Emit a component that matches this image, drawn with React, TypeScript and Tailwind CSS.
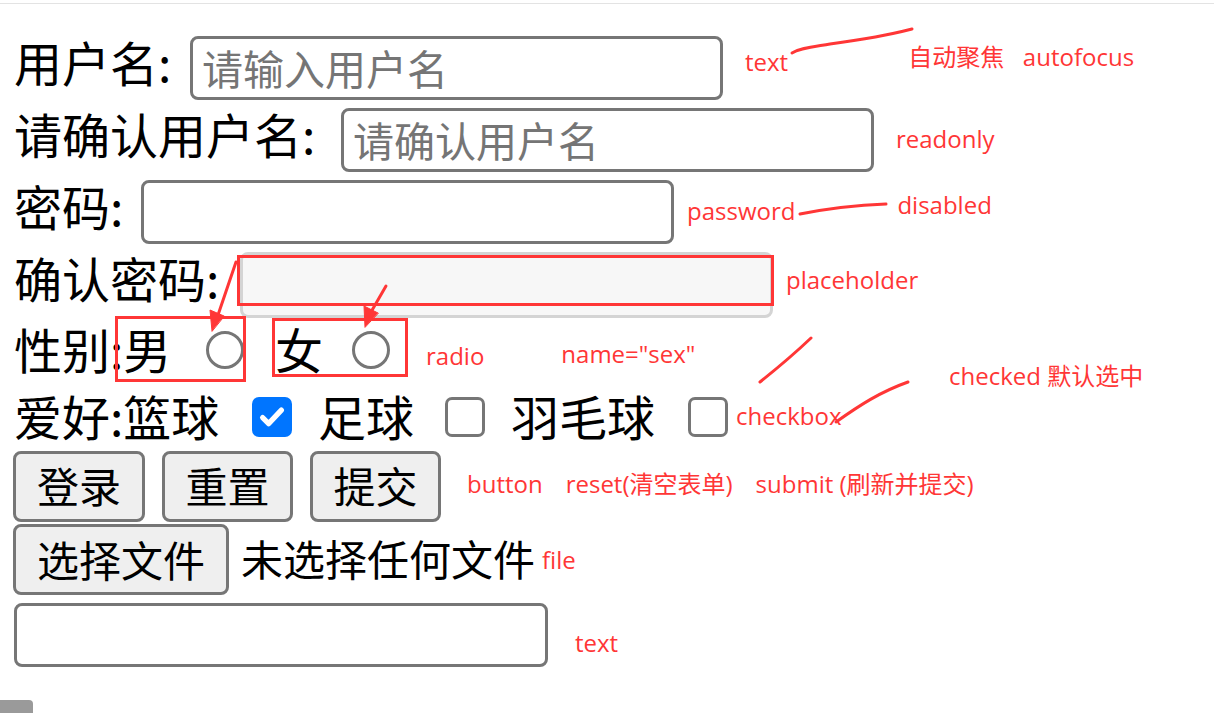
import React from 'react';

const RED = '#ff3636';

function TextInput({ placeholder, className = '' }: { placeholder?: string; className?: string }) {
  return (
    <input
      type="text"
      placeholder={placeholder}
      className={`h-[64px] w-[533px] shrink-0 rounded-[8px] border-[3px] border-[#767676] bg-white px-[9px] pb-[2px] text-[41px] text-black outline-none placeholder:text-[#757575] ${className}`}
    />
  );
}

function Radio() {
  return <span className="block h-[38px] w-[38px] shrink-0 rounded-full border-[3px] border-[#767676] bg-white" />;
}

function Checkbox({ checked }: { checked?: boolean }) {
  if (checked) {
    return (
      <span className="flex h-[40px] w-[40px] shrink-0 items-center justify-center rounded-[7px] bg-[#0075ff]">
        <svg width="30" height="30" viewBox="0 0 24 24" fill="none">
          <path d="M4.5 12.5l4.8 4.8L19.5 6.5" stroke="white" strokeWidth="4.2" strokeLinecap="round" strokeLinejoin="round" />
        </svg>
      </span>
    );
  }
  return <span className="block h-[40px] w-[40px] shrink-0 rounded-[7px] border-[3px] border-[#767676] bg-white" />;
}

function Btn({ children, w }: { children: React.ReactNode; w: string }) {
  return (
    <button className={`flex h-[71px] ${w} shrink-0 items-center justify-center rounded-[8px] border-[3px] border-[#767676] bg-[#efefef] pb-[2px] text-[42px] text-black`}>
      {children}
    </button>
  );
}

// red handwritten note, sits in the row flow
function Note({ className = '', children }: { className?: string; children: React.ReactNode }) {
  return (
    <span className={`note shrink-0 whitespace-pre text-[24px] leading-none text-[#ff3636] ${className}`}>
      {children}
    </span>
  );
}

export default function App() {
  return (
    <div
      className="relative h-[713px] w-[1214px] overflow-hidden bg-white text-black"
      style={{ fontFamily: '"Noto Sans CJK SC", "Noto Sans", sans-serif' }}
    >
      <style>{`.note{font-family:"Open Sans","Noto Sans CJK SC",sans-serif}`}</style>
      <div className="h-[4px] border-b border-[#e3e3e3]" />

      <div className="flex flex-col pl-[14px] pt-[28px] text-[48px] leading-none">
        <div className="flex h-[72px] items-center">
          <span className="w-[176px] shrink-0 pb-[15px]">用户名:</span>
          <TextInput placeholder="请输入用户名" />
          <Note className="ml-[22px] pb-[12px]">text</Note>
          <Note className="ml-[120px] pb-[22px]">{'自动聚焦   autofocus'}</Note>
        </div>
        <div className="flex h-[72px] items-center">
          <span className="w-[327px] shrink-0 pb-[15px]">请确认用户名:</span>
          <TextInput placeholder="请确认用户名" />
          <Note className="ml-[22px] pb-[2px]">readonly</Note>
        </div>
        <div className="flex h-[72px] items-center">
          <span className="w-[127px] shrink-0 pb-[15px]">密码:</span>
          <TextInput />
          <Note className="ml-[13px] pb-[2px]">password</Note>
          <Note className="ml-[102px] pb-[14px]">disabled</Note>
        </div>
        <div className="flex h-[73px] items-center">
          <span className="w-[226px] shrink-0 pb-[15px]">确认密码:</span>
          <input
            disabled
            className="h-[66px] w-[533px] shrink-0 rounded-[8px] border-[3px] border-[#d4d4d4] bg-[#f7f7f7]"
          />
          <Note className="ml-[13px] pb-[10px]">placeholder</Note>
        </div>
        <div className="flex h-[58px] items-center">
          <span className="w-[192px] shrink-0 pb-[5px]">性别:男</span>
          <Radio />
          <span className="ml-[31px] w-[77px] shrink-0 pb-[5px]">女</span>
          <Radio />
          <Note className="ml-[36px] pt-[12px]">radio</Note>
          <Note className="ml-[77px] pt-[8px]">name="sex"</Note>
        </div>
        <div className="flex h-[76px] items-center">
          <span className="w-[238px] shrink-0 pb-[4px]">爱好:篮球</span>
          <Checkbox checked />
          <span className="ml-[26px] w-[127px] shrink-0 pb-[4px]">足球</span>
          <Checkbox />
          <span className="ml-[26px] w-[177px] shrink-0 pb-[4px]">羽毛球</span>
          <Checkbox />
          <Note className="ml-[8px] pb-[2px]">checkbox</Note>
        </div>
        <div className="-ml-[1px] flex h-[62px] items-center">
          <div className="flex gap-[17px]">
            <Btn w="w-[132px]">登录</Btn>
            <Btn w="w-[131px]">重置</Btn>
            <Btn w="w-[131px]">提交</Btn>
          </div>
          <div className="ml-[26px] flex gap-[23px] pb-[4px]">
            <Note>button</Note>
            <Note>reset(清空表单)</Note>
            <Note>submit (刷新并提交)</Note>
          </div>
        </div>
        <div className="-ml-[1px] flex h-[85px] items-center">
          <Btn w="w-[216px]">选择文件</Btn>
          <span className="ml-[12px] pb-[4px] text-[42px]">未选择任何文件</span>
          <Note className="ml-[7px]">file</Note>
        </div>
        <div className="flex h-[66px] items-center">
          <TextInput className="w-[534px]" />
          <Note className="ml-[27px] pt-[16px]">text</Note>
        </div>
      </div>

      {/* hand-drawn markup over the form */}
      <div className="absolute left-[237px] top-[255px] h-[51px] w-[537px] border-[3px] border-[#ff3636]" />
      <div className="absolute left-[115px] top-[316px] h-[66px] w-[131px] border-[3px] border-[#ff3636]" />
      <div className="absolute left-[272px] top-[318px] h-[59px] w-[136px] border-[3px] border-[#ff3636]" />
      <span className="note absolute left-[949px] top-[364px] whitespace-pre text-[24px] leading-none text-[#ff3636]">
        checked 默认选中
      </span>

      <svg className="absolute left-0 top-0" width="1214" height="713" fill="none" stroke={RED} strokeLinecap="round">
        <path d="M792 53 C 800 48, 812 47, 830 44 C 860 40, 885 36, 912 29" strokeWidth="3" />
        <path d="M800 214 C 830 208, 860 205, 886 204" strokeWidth="3" />
        <path d="M811 338 C 790 358, 775 370, 760 382" strokeWidth="3" />
        <path d="M908 382 C 880 392, 860 405, 836 422" strokeWidth="3" />
        <path d="M236 262 L 218 315" strokeWidth="3" />
        <path d="M212 331 L 210 310 L 224 316 Z" fill={RED} strokeWidth="1" />
        <path d="M386 286 L 371 312" strokeWidth="3" />
        <path d="M365 327 L 364 306 L 378 313 Z" fill={RED} strokeWidth="1" />
      </svg>

      <div className="absolute bottom-0 left-0 h-[13px] w-[33px] rounded-tr-[4px] bg-[#9a9a9a]" />
    </div>
  );
}
